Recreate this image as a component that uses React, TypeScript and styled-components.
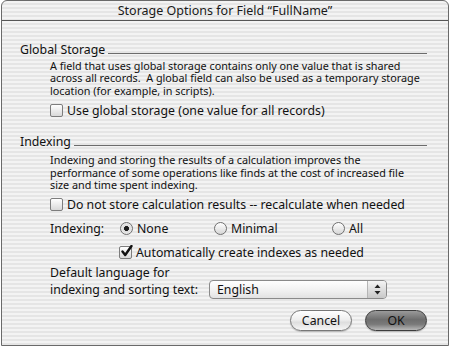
import React from "react";
import styled, { createGlobalStyle } from "styled-components";

const GlobalStyle = createGlobalStyle`
  html, body {
    margin: 0;
    padding: 0;
    background: #ffffff;
  }
  body {
    font-family: "Noto Sans", "DejaVu Sans", sans-serif;
    color: #111;
  }
`;

const stripes = `repeating-linear-gradient(to bottom, #f3f3f3 0px, #f3f3f3 2px, #e5e5e5 2px, #e5e5e5 4px)`;

const Window = styled.div`
  margin-left: 1px;
  width: 446px;
  height: 344px;
  border: 1px solid #6a6a6a;
  border-radius: 6px 6px 0 0;
  background: ${stripes};
  display: flex;
  flex-direction: column;
  overflow: hidden;
  white-space: nowrap;
`;

const TitleBar = styled.div`
  height: 19px;
  border-bottom: 1px solid #555;
  display: flex;
  align-items: center;
  justify-content: center;
  font-size: 12.5px;
  color: #1a1a1a;
`;

const Content = styled.div`
  padding: 20px 21px 0 18px;
  display: flex;
  flex-direction: column;
`;

const GroupHead = styled.div<{ $top?: number }>`
  display: flex;
  align-items: center;
  gap: 3px;
  font-size: 12.3px;
  height: 16px;
  margin-top: ${(p) => p.$top ?? 0}px;

  &::after {
    content: "";
    flex: 1;
    border-bottom: 1px solid #6c6c6c;
    margin-top: 8px;
  }
`;

const Note = styled.p<{ $top?: number }>`
  margin: ${(p) => p.$top ?? 3}px 0 0 30px;
  font-size: 10.8px;
  line-height: 12.4px;
  color: #111;
  white-space: normal;
  width: 370px;
`;

const Row = styled.div<{ $indent?: number; $top?: number }>`
  display: flex;
  align-items: center;
  margin-left: ${(p) => p.$indent ?? 30}px;
  margin-top: ${(p) => p.$top ?? 0}px;
  font-size: 12.3px;
  height: 16px;
`;

const Box = styled.span`
  width: 13px;
  height: 13px;
  box-sizing: border-box;
  border: 1px solid #7d7d7d;
  border-radius: 2px;
  background: linear-gradient(to bottom, #ffffff, #d9d9d9);
  margin-right: 4px;
  position: relative;
  flex-shrink: 0;
`;

const Radio = styled.span<{ $on?: boolean }>`
  width: 13px;
  height: 13px;
  box-sizing: border-box;
  border: 1px solid #6f6f6f;
  border-radius: 50%;
  background: ${(p) =>
    p.$on
      ? "radial-gradient(circle, #1c1c1c 0 2.2px, #dcdcdc 2.8px, #f6f6f6 100%)"
      : "linear-gradient(to bottom, #ffffff, #d6d6d6)"};
  margin-right: 4px;
  flex-shrink: 0;
`;

const RadioItem = styled.span<{ $w: number }>`
  display: flex;
  align-items: center;
  width: ${(p) => p.$w}px;
`;

const Label = styled.span<{ $w?: number }>`
  display: inline-block;
  width: ${(p) => (p.$w ? `${p.$w}px` : "auto")};
`;

const LangRow = styled.div`
  display: flex;
  align-items: flex-end;
  margin: 4px 0 0 30px;
  font-size: 12.3px;
`;

const LangLabel = styled.div`
  width: 159px;
  display: flex;
  flex-direction: column;
`;

const LangLine = styled.span`
  height: 17px;
  line-height: 17px;
`;

const Popup = styled.div`
  width: 178px;
  height: 19px;
  box-sizing: border-box;
  border: 1px solid #8a8a8a;
  border-radius: 4px;
  background: linear-gradient(to bottom, #ffffff, #f0f0f0 60%, #e2e2e2);
  display: flex;
  align-items: center;
  padding-left: 7px;
  margin-bottom: -1px;
`;

const PopupText = styled.span`
  flex: 1;
`;

const Stepper = styled.span`
  width: 18px;
  height: 100%;
  border-left: 1px solid #b5b5b5;
  background: linear-gradient(to bottom, #f4f4f4, #c8c8c8);
  border-radius: 0 3px 3px 0;
  display: flex;
  align-items: center;
  justify-content: center;
`;

const Buttons = styled.div`
  display: flex;
  justify-content: flex-end;
  gap: 13px;
  margin-top: 12px;
`;

const PushButton = styled.button<{ $default?: boolean }>`
  width: 62px;
  height: 21px;
  border-radius: 11px;
  border: 1px solid ${(p) => (p.$default ? "#3c3c3c" : "#777")};
  font-family: inherit;
  font-size: 12.3px;
  line-height: 19px;
  color: #111;
  padding: 0;
  background: ${(p) =>
    p.$default
      ? "linear-gradient(to bottom, #9a9a9a 0%, #6e6e6e 45%, #7a7a7a 70%, #b8b8b8 100%)"
      : "linear-gradient(to bottom, #ffffff 0%, #efefef 45%, #dedede 60%, #f6f6f6 100%)"};
  box-shadow: 0 1px 1px rgba(0, 0, 0, 0.2);
`;

const CheckMark = () => (
  <svg
    width="13"
    height="13"
    viewBox="0 0 13 13"
    style={{ position: "absolute", left: 0, top: -2 }}
  >
    <path
      d="M2.5 6.5 L5.2 10 L11.5 1"
      fill="none"
      stroke="#111"
      strokeWidth="2.4"
      strokeLinecap="round"
      strokeLinejoin="round"
    />
  </svg>
);

const Arrows = () => (
  <svg width="7" height="11" viewBox="0 0 7 11">
    <path d="M3.5 0.5 L6.5 4 L0.5 4 Z" fill="#222" />
    <path d="M3.5 10.5 L6.5 7 L0.5 7 Z" fill="#222" />
  </svg>
);

const App = () => {
  return (
    <>
      <GlobalStyle />
      <Window>
        <TitleBar>Storage Options for Field “FullName”</TitleBar>
        <Content>
          <GroupHead>Global Storage</GroupHead>
          <Note>
            A field that uses global storage contains only one value that is
            shared across all records.&nbsp; A global field can also be used as a
            temporary storage location (for example, in scripts).
          </Note>
          <Row $top={5}>
            <Box />
            Use global storage (one value for all records)
          </Row>

          <GroupHead $top={15}>Indexing</GroupHead>
          <Note $top={5}>
            Indexing and storing the results of a calculation improves the
            performance of some operations like finds at the cost of increased
            file size and time spent indexing.
          </Note>
          <Row $top={5}>
            <Box />
            Do not store calculation results -- recalculate when needed
          </Row>
          <Row $top={8}>
            <Label $w={70}>Indexing:</Label>
            <RadioItem $w={94}>
              <Radio $on />
              None
            </RadioItem>
            <RadioItem $w={118}>
              <Radio />
              Minimal
            </RadioItem>
            <RadioItem $w={60}>
              <Radio />
              All
            </RadioItem>
          </Row>
          <Row $indent={99} $top={8}>
            <Box>
              <CheckMark />
            </Box>
            Automatically create indexes as needed
          </Row>
          <LangRow>
            <LangLabel>
              <LangLine>Default language for</LangLine>
              <LangLine>indexing and sorting text:</LangLine>
            </LangLabel>
            <Popup>
              <PopupText>English</PopupText>
              <Stepper>
                <Arrows />
              </Stepper>
            </Popup>
          </LangRow>
          <Buttons>
            <PushButton>Cancel</PushButton>
            <PushButton $default>OK</PushButton>
          </Buttons>
        </Content>
      </Window>
    </>
  );
};

export default App;
